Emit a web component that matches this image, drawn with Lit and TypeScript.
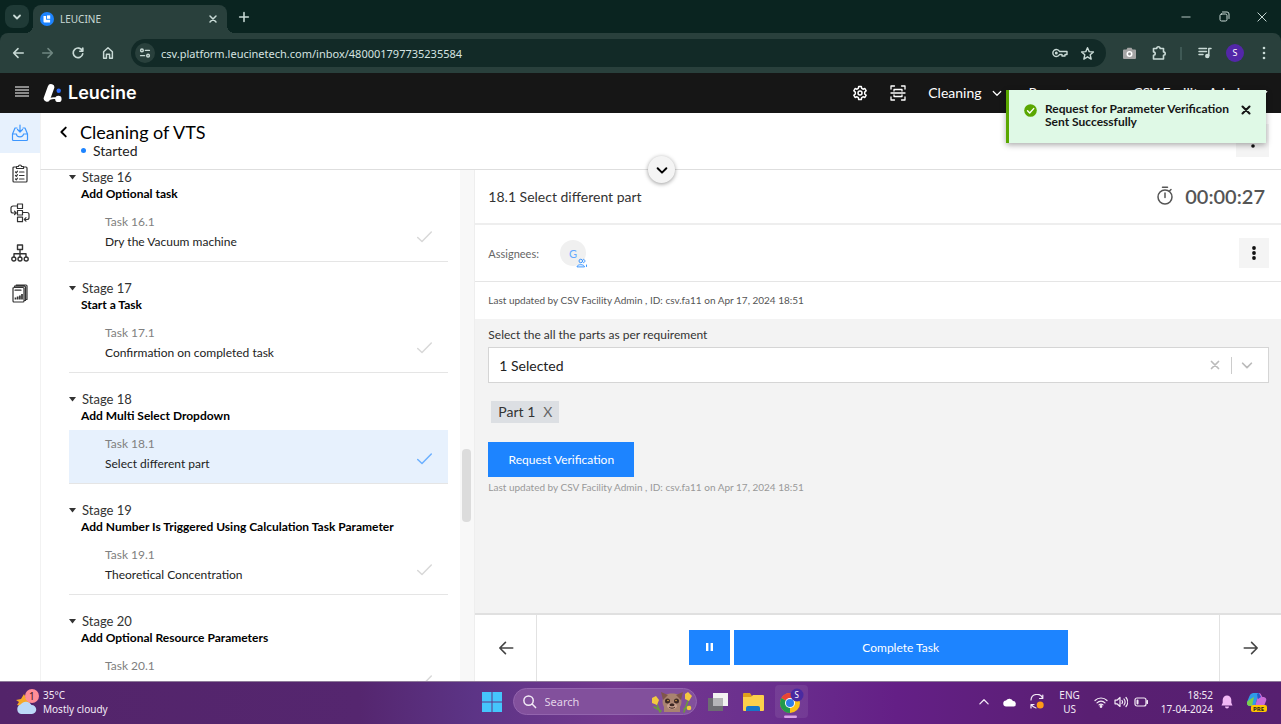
import { LitElement, html, css } from "lit";
import { customElement, property } from "lit/decorators.js";

interface Stage {
  no: number;
  name: string;
  task: string;
  active?: boolean;
}

const stages: Stage[] = [
  { no: 16, name: "Add Optional task", task: "Dry the Vacuum machine" },
  { no: 17, name: "Start a Task", task: "Confirmation on completed task" },
  { no: 18, name: "Add Multi Select Dropdown", task: "Select different part", active: true },
  { no: 19, name: "Add Number Is Triggered Using Calculation Task Parameter", task: "Theoretical Concentration" },
  { no: 20, name: "Add Optional Resource Parameters", task: "" },
];

const reset = css`
  * { box-sizing: border-box; }
  button, input, select {
    font: inherit; color: inherit; background: none; border: 0; margin: 0; padding: 0;
    border-radius: 0; appearance: none; outline: none; min-width: 0;
  }
  button { display: inline-flex; align-items: center; justify-content: center; cursor: pointer; flex: none; }
  a { color: inherit; text-decoration: none; }
  svg { display: block; flex: none; fill: none; stroke: currentColor; stroke-linecap: round; stroke-linejoin: round; }
  .solid { fill: currentColor; stroke: none; }
  .art { stroke: none; }
`;

const line = (size: number, width: number, d: string) => html`
  <svg width=${size} height=${size} viewBox="0 0 16 16" stroke-width=${width} aria-hidden="true"><path d=${d} /></svg>`;

@customElement("browser-chrome")
export class BrowserChrome extends LitElement {
  static styles = [reset, css`
    :host { display: block; flex: none; background: #0a2420; color: #c9dad6; font: 11px/16px "Noto Sans", sans-serif; }
    .tabs { display: flex; align-items: flex-end; height: 33px; padding-left: 5px; }
    .menu { width: 24px; height: 23px; border-radius: 8px; background: #1f3a36; align-self: center; }
    .tab { position: relative; display: flex; align-items: center; width: 194px; height: 28px; margin-left: 4px; padding: 0 8px 0 7px;
      border-radius: 8px 8px 0 0; background: #29403c; gap: 6px; font-size: 10px; }
    .tab::before, .tab::after { content: ""; position: absolute; bottom: 0; width: 8px; height: 8px; }
    .tab::before { right: 100%; background: radial-gradient(circle at 0 0, transparent 8px, #29403c 8px); }
    .tab::after { left: 100%; background: radial-gradient(circle at 100% 0, transparent 8px, #29403c 8px); }
    .name { flex: 1; }
    .add { width: 28px; height: 28px; margin: 0 auto 0 3px; align-self: center; }
    .win { width: 38px; height: 33px; }
    .bar { display: flex; align-items: center; height: 40px; padding: 0 7px 0 8px; background: #29403c; border-radius: 8px 8px 0 0; }
    .nav { width: 20px; height: 28px; margin-right: 10px; }
    .dim { color: #6f8681; }
    .url { display: flex; align-items: center; flex: 1; height: 28px; margin: 0 8px 0 3px; padding: 0 11px 0 4px; border-radius: 14px; background: #122a27; }
    .site { width: 20px; height: 20px; border-radius: 50%; background: #29403c; margin-right: 6px; }
    .text { flex: 1; height: 20px; color: #d5e3e0; }
    .end { margin-left: 12px; }
    .ext { width: 30px; height: 28px; }
    .sep { width: 2px; height: 13px; margin: 0 8px 0 6px; background: #3f5955; }
    .me { width: 18px; height: 18px; margin: 0 6px; border-radius: 50%; background: #5327a8; color: #fff; font-size: 9px; }
    .more { width: 20px; height: 28px; margin-left: 4px; }
  `];

  render() {
    return html`
      <div class="tabs">
        <button class="menu" aria-label="Search tabs">${line(12, 2.4, "M4 6l4 4 4-4")}</button>
        <div class="tab">
          <svg class="art" width="14" height="14" viewBox="0 0 14 14" aria-hidden="true">
            <circle cx="7" cy="7" r="7" fill="#1d84ff" />
            <path d="M3.500 4h2.600v3.800h4v2.600H4.500a1 1 0 0 1-1-1z" fill="#fff" /><path d="M7 3.400h3.200v3.400H7z" fill="#fff" />
          </svg>
          <span class="name">LEUCINE</span>
          <button aria-label="Close tab">${line(12, 2, "M4 4l8 8M12 4l-8 8")}</button>
        </div>
        <button class="add" aria-label="New tab">${line(14, 1.8, "M8 3v10M3 8h10")}</button>
        <button class="win" aria-label="Minimize">${line(12, 1.2, "M2.500 8h11")}</button>
        <button class="win" aria-label="Restore">
          <svg width="11" height="11" viewBox="0 0 11 11" aria-hidden="true"><rect x="1" y="3" width="7" height="7" rx="1.500" /><path d="M3.500 1h4.500a2 2 0 0 1 2 2v4.500" /></svg>
        </button>
        <button class="win" aria-label="Close">${line(12, 1.3, "M2.500 2.500l11 11M13.500 2.500l-11 11")}</button>
      </div>
      <div class="bar">
        <button class="nav" aria-label="Back">${line(14, 1.8, "M14 8H3M8 3L3 8l5 5")}</button>
        <button class="nav dim" aria-label="Forward">${line(14, 1.8, "M2 8h11M8 3l5 5-5 5")}</button>
        <button class="nav" aria-label="Reload">${line(14, 1.9, "M13 5.500A5.500 5.500 0 1 0 13.400 9M13.500 2.500v3.500H10")}</button>
        <button class="nav" aria-label="Home">${line(14, 1.7, "M3 6.500L8 2l5 4.500V14h-3.200V9.500H6.200V14H3z")}</button>
        <div class="url">
          <button class="site" aria-label="Site information">${line(14, 1.7, "M8.500 5H13M3 11h4.500M3 5a1.500 1.500 0 1 0 3 0a1.500 1.500 0 1 0-3 0M10 11a1.500 1.500 0 1 0 3 0a1.500 1.500 0 1 0-3 0")}</button>
          <input class="text" aria-label="Address" value="csv.platform.leucinetech.com/inbox/480001797735235584" />
          <button class="end" aria-label="Passwords">
            <svg width="16" height="12" viewBox="0 0 16 12" stroke-width="1.400" aria-hidden="true"><path d="M7.500 4.500A3.500 3.500 0 1 0 7.500 7.500H10V9h3V7.500h2v-3z" /><circle cx="4.300" cy="6" r=".8" /></svg>
          </button>
          <button class="end" aria-label="Bookmark">${line(15, 1.5, "M8 1.800l1.800 4.200 4.500.4-3.400 3 1 4.500L8 11.500l-3.900 2.400 1-4.500-3.400-3 4.500-.4z")}</button>
        </div>
        <button class="ext" aria-label="Screenshot extension">
          <svg class="art" width="13" height="12" viewBox="0 0 13 12" aria-hidden="true"><path d="M1 2.500h2.500l1-1.800h4l1 1.800H12a1 1 0 0 1 1 1V11a1 1 0 0 1-1 1H1a1 1 0 0 1-1-1V3.500a1 1 0 0 1 1-1z" fill="#a5a5a5" /><circle cx="6.500" cy="7" r="3" fill="#fff" /><circle cx="6.500" cy="7" r="1.400" fill="#888" /></svg>
        </button>
        <button class="ext" aria-label="Extensions">${line(16, 1.6, "M2.500 3.500h3.200a1.700 1.700 0 1 1 3.400 0h3.400v3.400a1.700 1.700 0 1 1 0 3.400v3.700h-10v-3.700a1.700 1.700 0 1 0 0-3.400z")}</button>
        <span class="sep"></span>
        <button class="ext" aria-label="Media">
          <svg width="14" height="12" viewBox="0 0 14 12" stroke-width="1.500" aria-hidden="true"><path d="M1 1.500h7.500M1 4.500h7.500M1 7.500h4M10.800 8.500V1.500h2.200" /><circle cx="9.300" cy="9" r="1.500" fill="currentColor" /></svg>
        </button>
        <button class="me" aria-label="Profile">S</button>
        <button class="more" aria-label="Menu"><svg class="solid" width="4" height="14" viewBox="0 0 4 14" aria-hidden="true"><circle cx="2" cy="2" r="1.300" /><circle cx="2" cy="7" r="1.300" /><circle cx="2" cy="12" r="1.300" /></svg></button>
      </div>`;
  }
}

@customElement("app-header")
export class AppHeader extends LitElement {
  static styles = [reset, css`
    :host { display: flex; flex: none; align-items: center; height: 40px; padding: 0 12px 0 15px; background: #161616; color: #fff; font-size: 14px; line-height: 20px; }
    .brand { display: flex; align-items: center; gap: 6px; margin: 0 auto 0 14px; font: 600 18px/20px "Inter", sans-serif; }
    .toggle { padding-bottom: 2px; }
    .tool { margin-right: 22px; }
    .item { display: flex; gap: 9px; }
    .reports { margin: 0 57px 0 26px; }
  `];

  render() {
    const caret = line(12, 1.6, "M3 6l5 5 5-5");
    return html`
      <button class="toggle" aria-label="Toggle menu"><svg width="14" height="12" viewBox="0 0 14 12" stroke-width="1.200" aria-hidden="true"><path d="M.5 1h13M.5 4h13M.5 7h13M.5 10h13" /></svg></button>
      <a class="brand" href="#">
        <svg class="art" width="19" height="20" viewBox="0 0 19 20" aria-hidden="true">
          <path d="M8 4.300L4 15.300" stroke="#fff" stroke-width="6.600" /><path d="M7 15.800c3-.9 5-.9 8.500 0" stroke="#fff" stroke-width="1.800" />
          <circle cx="15.400" cy="15.900" r="3.200" fill="#fff" /><circle cx="15.700" cy="7.800" r="2.200" fill="#2b6cff" />
        </svg>
        Leucine
      </a>
      <button class="tool" aria-label="Settings">
        <svg width="16" height="16" viewBox="0 0 16 16" stroke-width="1.500" aria-hidden="true"><path d="M6.700 1.500h2.600l.4 1.900 1.300.8 1.900-.7 1.300 2.300-1.500 1.300v1.800l1.500 1.300-1.300 2.300-1.900-.7-1.300.8-.4 1.900H6.700l-.4-1.900-1.300-.8-1.900.7-1.300-2.300 1.500-1.300V7.100L1.800 5.800l1.300-2.300 1.900.7 1.300-.8z" /><circle cx="8" cy="8" r="2" /></svg>
      </button>
      <button class="tool" aria-label="Scan">
        <svg width="16" height="16" viewBox="0 0 16 16" stroke-width="1.300" aria-hidden="true"><path d="M1 4V1h3.500M11.500 1H15v3M15 12v3h-3.500M4.500 15H1v-3M1 8h14M4 6V4.500h8V6M4 10v1.500h8V10" /></svg>
      </button>
      <button class="item">Cleaning ${caret}</button>
      <a class="reports" href="#">Reports</a>
      <button class="item">CSV Facility Admin ${caret}</button>`;
  }
}

@customElement("side-nav")
export class SideNav extends LitElement {
  static styles = [reset, css`
    :host { display: flex; flex-direction: column; flex: none; width: 40px; background: #fff; color: #333; }
    .link { display: flex; align-items: center; justify-content: center; height: 40px; }
    .on { background: #e7f1fd; color: #3d97ff; }
  `];

  render() {
    return html`
      <a class="link on" href="#" aria-label="Inbox"><svg width="18" height="18" viewBox="0 0 18 18" stroke-width="1.200" aria-hidden="true"><path d="M9 1v7M6.500 5.500L9 8l2.500-2.500M6 4H4L1.500 10v5.500a1 1 0 0 0 1 1h13a1 1 0 0 0 1-1V10L14 4h-2M1.500 10h4a3.500 2.800 0 0 0 7 0h4" /></svg></a>
      <a class="link" href="#" aria-label="Checklists"><svg width="16" height="19" viewBox="0 0 16 19" stroke-width="1.200" aria-hidden="true"><path d="M4.500 3H2a1 1 0 0 0-1 1v13a1 1 0 0 0 1 1h12a1 1 0 0 0 1-1V4a1 1 0 0 0-1-1h-2.500M4.500 4.500V2.500h2a1.500 1.500 0 0 1 3 0h2v2zM3.500 8l.8.800 1.200-1.600M7.500 8H12M3.500 11.500l.8.800 1.200-1.600M7.500 11.500H12M3.500 15l.8.800 1.200-1.600M7.500 15H12" /></svg></a>
      <a class="link" href="#" aria-label="Workflows"><svg width="20" height="20" viewBox="0 0 20 20" stroke-width="1.200" aria-hidden="true"><path d="M7.500 1h5v4.500h-5zM7.500 7.500h5V12h-5zM7.500 14.200h5v4.500h-5zM7.500 3H3a2 2 0 0 0-2 2v3a2 2 0 0 0 2 2h3M4.500 8.200L6.200 10l-1.700 1.700M12.500 9.500H17a2 2 0 0 1 2 2v3a2 2 0 0 1-2 2h-2.500M16 14.700l-1.700 1.800 1.700 1.700" /></svg></a>
      <a class="link" href="#" aria-label="Hierarchy"><svg width="18" height="18" viewBox="0 0 18 18" stroke-width="1.400" aria-hidden="true"><path d="M6.500 1h5v4.500h-5zM9 5.500V13M3 13v-3.200h12V13" /><circle cx="2.800" cy="15" r="2" /><circle cx="9" cy="15" r="2" /><circle cx="15.200" cy="15" r="2" /></svg></a>
      <a class="link" href="#" aria-label="Reports"><svg width="16" height="19" viewBox="0 0 16 19" stroke-width="1.200" aria-hidden="true"><path d="M1 4.500a1 1 0 0 1 1-1h9a1 1 0 0 1 1 1V17a1 1 0 0 1-1 1H2a1 1 0 0 1-1-1zM2.500 3.500V2.200h10a1 1 0 0 1 1 1V16.500H12M4.200 2.200V1H14a1 1 0 0 1 1 1v13.500h-1.500M3 6.200h6" /><path d="M3.500 15.500v-2M5.700 15.500v-3M7.900 15.500v-4M10 15.500V10" stroke-width="1.700" stroke-linecap="butt" /></svg></a>`;
  }
}

@customElement("stage-list")
export class StageList extends LitElement {
  @property({ attribute: false }) stages: Stage[] = [];

  static styles = [reset, css`
    :host { display: flex; flex: none; width: 35%; overflow: hidden; background: #fff; border-left: 1px solid #f2f2f2; color: #333; font-size: 12px; line-height: 20px; }
    .list { flex: 1; min-width: 0; padding: 0 12px 0 28px; height: 0; }
    .stage { margin-bottom: 19px; }
    .head { display: flex; align-items: center; gap: 6px; height: 14px; font-size: 13px; }
    .name { padding-left: 12px; color: #000; font-weight: 700; margin: 0 0 4px; font-size: inherit; }
    .task { display: flex; align-items: center; height: 54px; padding: 4px 16px 0 36px; border-bottom: 1px solid #e5e5e5; color: #222; }
    .label { flex: 1; align-self: flex-start; }
    .no { display: block; color: #808080; }
    .tick { color: #d8d8d8; }
    .active { background: #e7f1fd; }
    .active .tick { color: #6cb0ff; }
    .gutter { flex: none; width: 14px; background: #f8f8f8; padding: 279px 3px 0 2px; }
    .thumb { height: 73px; border-radius: 4px; background: #dcdcdc; }
  `];

  render() {
    return html`
      <div class="list">
        ${this.stages.map((s) => html`
          <section class="stage">
            <button class="head">
              <svg class="solid" width="7" height="5" viewBox="0 0 7 5" aria-hidden="true"><path d="M0 0h7L3.500 4.500z" /></svg>
              Stage ${s.no}
            </button>
            <h3 class="name">${s.name}</h3>
            <a class="task ${s.active ? "active" : ""}" href="#">
              <span class="label"><span class="no">Task ${s.no}.1</span>${s.task}</span>
              <svg class="tick" width="15" height="12" viewBox="0 0 15 12" stroke-width="1.500" stroke-linecap="butt" aria-hidden="true"><path d="M.7 6.500L5 10.500 14.300 1" /></svg>
            </a>
          </section>`)}
      </div>
      <div class="gutter"><div class="thumb"></div></div>`;
  }
}

@customElement("task-panel")
export class TaskPanel extends LitElement {
  static styles = [reset, css`
    :host { display: flex; flex-direction: column; flex: 1; min-width: 0; background: #fff; color: #333; border-left: 1px solid #eee; }
    .title { display: flex; align-items: center; height: 55px; padding: 0 16px 0 13px; border-bottom: 2px solid #eee; }
    .h { flex: 1; margin: 0; font-size: 14px; line-height: 20px; font-weight: 400; }
    .timer { display: flex; align-items: center; gap: 12px; padding-bottom: 2px; color: #555; font-size: 20px; line-height: 24px; font-weight: 600; }
    .who { display: flex; align-items: center; height: 57px; padding: 0 12px 0 13px; border-bottom: 1px solid #e5e5e5; color: #666; font-size: 11px; }
    .avatar { position: relative; width: 26px; height: 26px; margin: 0 auto 0 21px; border-radius: 50%; background: #f0f0f0; color: #63a9ff; display: grid; place-items: center; }
    .badge { position: absolute; left: 16px; top: 18px; color: #3d97ff; }
    .dots { width: 30px; height: 30px; background: #f4f4f4; color: #111; }
    .info { padding: 8px 13px; font-size: 10px; line-height: 21px; color: #555; }
    .body { flex: 1; padding: 6px 12px 0 13px; background: #f3f3f3; font-size: 12px; line-height: 20px; }
    .box { display: flex; align-items: center; height: 36px; margin-top: 2px; padding: 0 14px 0 10px; background: #fff; border: 1px solid #d5d5d5; color: #bbb; gap: 8px; }
    .pick { flex: 1; height: 34px; font-size: 14px; color: #222; padding-top: 2px; }
    .bar { width: 1px; height: 17px; background: #ccc; margin: 0 0 0 1px; }
    .chip { display: inline-flex; align-items: center; gap: 8px; height: 22px; margin: 18px 0 0 3px; padding: 0 7px; background: #dcdfe3; font-size: 14px; }
    .x { color: #666; }
    .verify { display: flex; width: 146px; height: 35px; margin-top: 19px; background: #1d84ff; color: #fff; }
    .note { margin: 0; color: #999; font-size: 10px; line-height: 21px; }
    .foot { display: flex; height: 68px; border-top: 2px solid #e0e0e0; color: #444; }
    .step { width: 62px; border-right: 1px solid #e2e2e2; }
    .next { border-right: 0; border-left: 1px solid #e2e2e2; }
    .acts { flex: 1; display: flex; align-items: center; justify-content: center; gap: 4px; padding-bottom: 2px; font-size: 12px; color: #fff; }
    .pause { width: 41px; height: 35px; background: #1d84ff; }
    .done { width: 49%; height: 35px; background: #1d84ff; }
  `];

  render() {
    const dots = html`<svg class="solid" width="4" height="14" viewBox="0 0 4 14" aria-hidden="true"><circle cx="2" cy="2" r="1.900" /><circle cx="2" cy="7" r="1.900" /><circle cx="2" cy="12" r="1.900" /></svg>`;
    return html`
      <div class="title">
        <h2 class="h">18.1 Select different part</h2>
        <span class="timer">
          <svg width="16" height="19" viewBox="0 0 16 19" stroke-width="1.500" stroke-linecap="butt" aria-hidden="true"><circle cx="8" cy="11" r="7" /><path d="M5.500 1.200h5M8 7v4.500M12.500 5l1.500-1.500" /></svg>
          00:00:27
        </span>
      </div>
      <div class="who">
        Assignees:
        <span class="avatar">G
          <svg class="badge" width="12" height="10" viewBox="0 0 12 10" aria-hidden="true"><circle cx="4.800" cy="3" r="1.800" /><path d="M1 8.500c0-2.500 7.500-2.500 7.500 0z" /><path d="M7.500 1.300c2 .2 2 3.200 0 3.400M10.500 7v1.500" /></svg>
        </span>
        <button class="dots" aria-label="Task options">${dots}</button>
      </div>
      <div class="info">Last updated by CSV Facility Admin , ID: csv.fa11 on Apr 17, 2024 18:51</div>
      <div class="body">
        <label for="parts">Select the all the parts as per requirement</label>
        <div class="box">
          <select class="pick" id="parts"><option>1 Selected</option></select>
          <button aria-label="Clear">${line(14, 2, "M4 4l8 8M12 4l-8 8")}</button>
          <span class="bar"></span>
          <button aria-label="Open">${line(14, 2, "M3 6l5 5 5-5")}</button>
        </div>
        <div class="chip">Part 1 <button class="x" aria-label="Remove Part 1">X</button></div>
        <button class="verify">Request Verification</button>
        <p class="note">Last updated by CSV Facility Admin , ID: csv.fa11 on Apr 17, 2024 18:51</p>
      </div>
      <div class="foot">
        <button class="step" aria-label="Previous task">${line(18, 1.4, "M14 8H2.500M7.500 3l-5 5 5 5")}</button>
        <div class="acts">
          <button class="pause" aria-label="Pause"><svg class="solid" width="7" height="8" viewBox="0 0 7 8" aria-hidden="true"><path d="M0 0h2.400v8H0zM4.600 0H7v8H4.600z" /></svg></button>
          <button class="done">Complete Task</button>
        </div>
        <button class="step next" aria-label="Next task">${line(18, 1.4, "M2 8h11.500M8.500 3l5 5-5 5")}</button>
      </div>`;
  }
}

@customElement("task-bar")
export class TaskBar extends LitElement {
  static styles = [reset, css`
    :host { display: grid; grid-template-columns: 1fr auto 1fr; align-items: center; flex: none; height: 43px; padding: 0 14px 3px;
      border-top: 1px solid #8d7a99; color: #f3eaf6; font: 10px/14px "Noto Sans", sans-serif;
      background: linear-gradient(90deg, #53246a 0%, #55266f 28%, #5c3486 37%, #74398f 48%, #6a2f8e 60%, #641f86 70%, #591f72 85%, #562070 100%); }
    .weather { display: flex; align-items: center; gap: 4px; justify-self: start; text-align: left; }
    .apps { display: flex; align-items: center; gap: 11px; margin-left: 8px; }
    .find { display: flex; align-items: center; width: 184px; height: 27px; padding: 0 3px 0 8px; border: 1px solid #9364ae; border-radius: 14px; background: #82509c; gap: 8px; }
    .q { flex: 1; font-size: 11px; height: 20px; }
    .q::placeholder { color: #e2d3e8; opacity: 1; }
    .app { height: 33px; }
    .files { margin-left: 4px; }
    .chrome { width: 33px; background: #ffffff14; border-radius: 4px; }
    .tray { display: flex; align-items: center; justify-self: end; }
    .lang { text-align: center; margin: 0 14px 0 15px; }
    .icon { margin-right: 13px; }
    .sys { gap: 6px; margin-right: 13px; }
    .clock { text-align: right; margin-right: 8px; }
    .bell { margin-right: 14px; }
  `];

  render() {
    return html`
      <button class="weather">
        <svg class="art" width="25" height="26" viewBox="0 0 25 26" aria-hidden="true">
          <path d="M10 5l2 4 4 1-2 4 1 5-12-3 2-3-3-2 5-1z" fill="#f7a928" /><circle cx="11" cy="14" r="5" fill="#f7a928" />
          <path d="M7 25a5 5 0 0 1-.5-9.500 6.500 6.500 0 0 1 11 .5A4.500 4.500 0 0 1 18 25z" fill="#bcd9f8" />
          <circle cx="18" cy="7" r="7" fill="#ff8c96" /><text x="15" y="11" font-size="10" fill="#3b1420">1</text>
        </svg>
        <span>35°C<br />Mostly cloudy</span>
      </button>
      <div class="apps">
        <button class="app" aria-label="Start"><svg class="art" width="20" height="20" viewBox="0 0 20 20" aria-hidden="true"><path d="M0 0h9.500v9.500H0zM10.500 0H20v9.500h-9.500zM0 10.500h9.500V20H0zM10.500 10.500H20V20h-9.500z" fill="#45c5fc" /></svg></button>
        <div class="find">
          ${line(15, 1.6, "M12 7A5 5 0 1 1 2 7A5 5 0 1 1 12 7M10.500 10.500L14.500 14.500")}
          <input class="q" placeholder="Search" aria-label="Search" />
          <svg class="art" width="42" height="24" viewBox="0 0 42 24" aria-hidden="true">
            <path d="M4 10l5 12M38 8l-5 14M10 21l-7-4M33 19l6-3" stroke="#6b9a3c" stroke-width="1.600" />
            <path d="M13 5c5-2 11-2 16 0 2 5 2 9 0 12v5H13v-5c-2-3-2-7 0-12z" fill="#a98370" /><path d="M10 2l7 3-5 5zM32 2l-7 3 5 5z" fill="#80564b" />
            <circle cx="16.500" cy="11" r="2.500" fill="#3d2824" /><circle cx="25.500" cy="11" r="2.500" fill="#3d2824" /><circle cx="17" cy="10.500" r=".8" fill="#d8a24a" /><circle cx="25" cy="10.500" r=".8" fill="#d8a24a" />
            <ellipse cx="21" cy="16" rx="5" ry="3.200" fill="#c9a08e" /><ellipse cx="21" cy="14.800" rx="2.500" ry="1.500" fill="#3d2824" /><path d="M18.500 17.500c1.500 1 3.500 1 5 0" stroke="#3d2824" />
            <path d="M1 8l4-2 3 4-2 5-5-2zM34 4l3-2 4 4-3 5-4-2z" fill="#f3c840" /><circle cx="38" cy="18" r="2.300" fill="#f3c840" />
          </svg>
        </div>
        <button class="app" aria-label="Task view"><svg class="art" width="20" height="20" viewBox="0 0 20 20" aria-hidden="true"><path d="M5 1h15v13H5z" fill="#f2f2f2" /><path d="M0 6h15v13H0z" fill="#6d6d72" /><path d="M5 6h10v8H5z" fill="#b5b5b8" /></svg></button>
        <button class="app files" aria-label="File Explorer"><svg class="art" width="21" height="20" viewBox="0 0 21 20" aria-hidden="true"><path d="M0 2a1 1 0 0 1 1-1h6l2 3h11v14H0z" fill="#e0a01c" /><path d="M0 5h8l2-2h10a1 1 0 0 1 1 1v14a1 1 0 0 1-1 1H1a1 1 0 0 1-1-1z" fill="#fcd04b" /><path d="M3 19v-3a2 2 0 0 1 2-2h10a2 2 0 0 1 2 2v3z" fill="#1677c8" /></svg></button>
        <button class="app chrome" aria-label="Chrome">
          <svg class="art" width="25" height="32" viewBox="0 0 25 32" aria-hidden="true">
            <circle cx="11" cy="17" r="10" fill="#fbc116" /><path d="M11 17L2.340 12A10 10 0 0 1 19.660 12z" fill="#ea4335" /><path d="M11 17L2.340 12A10 10 0 0 0 11 27z" fill="#229a4c" />
            <circle cx="11" cy="17" r="5" fill="#fff" /><circle cx="11" cy="17" r="4" fill="#2f7de9" />
            <circle cx="18" cy="9" r="6.500" fill="#4a2aa0" /><text x="15.500" y="12" font-size="8" fill="#fff">S</text><rect x="5" y="29.500" width="13" height="2.500" rx="1.200" fill="#d9a1e6" />
          </svg>
        </button>
      </div>
      <div class="tray">
        <button class="icon" aria-label="Hidden icons">${line(12, 1.7, "M2.500 10.500L8 5l5.500 5.500")}</button>
        <button class="icon" aria-label="Cloud storage"><svg class="art" width="14" height="10" viewBox="0 0 14 10" aria-hidden="true"><path d="M3.500 9.500a3 3 0 0 1-.5-6 4 4 0 0 1 7 .5 2.800 2.800 0 0 1 .8 5.500z" fill="#fff" /></svg></button>
        <button aria-label="Updates"><svg width="14" height="15" viewBox="0 0 14 15" stroke-width="1.200" aria-hidden="true"><path d="M1 6a6 6 0 0 1 11.500-2M12.800 1v3.500H9.500M1 14v-3.500h3M1.500 10.500A6 6 0 0 0 6 14" /><circle cx="10.200" cy="11" r="3.500" fill="#ff9a17" stroke="none" /></svg></button>
        <button class="lang">ENG<br />US</button>
        <button class="sys" aria-label="Network, volume and battery">
          <svg width="14" height="12" viewBox="0 0 14 12" stroke-width="1.200" aria-hidden="true"><path d="M1 4.500a8.500 8.500 0 0 1 12 0M3 6.800a5.600 5.600 0 0 1 8 0M5 8.900a3 3 0 0 1 4 0" /><circle cx="7" cy="10.500" r=".8" fill="currentColor" /></svg>
          <svg width="14" height="12" viewBox="0 0 14 12" stroke-width="1.200" aria-hidden="true"><path d="M1 4.200h2L6 1.500v9L3 7.800H1zM8 4.500a2.500 2.500 0 0 1 0 3M10 3a5 5 0 0 1 0 6M12 1.500a7 7 0 0 1 0 9" /></svg>
          <svg width="14" height="10" viewBox="0 0 14 10" stroke-width="1.200" aria-hidden="true"><rect x="1" y="1" width="11" height="8" rx="2" /><path d="M3.500 3.500v3M13.300 4v2" stroke-width="2" /></svg>
        </button>
        <button class="clock">18:52<br />17-04-2024</button>
        <button class="bell" aria-label="Notifications"><svg class="art" width="12" height="14" viewBox="0 0 12 14" aria-hidden="true"><path d="M6 .5a4.300 4.300 0 0 0-4.300 4.300v3L.5 10.500h11L10.300 7.800v-3A4.300 4.300 0 0 0 6 .5zM4 11.500h4a2 2 0 0 1-4 0z" fill="#f2b8f5" /></svg></button>
        <button aria-label="Copilot"><svg class="art" width="20" height="20" viewBox="0 0 20 20" aria-hidden="true">
          <path d="M6 1h6l-4 13H3a3 3 0 0 1-3-4l2.500-6A4 4 0 0 1 6 1z" fill="#2f9be8" /><path d="M2 8l5-3-2 9H3a3 3 0 0 1-3-4z" fill="#7cd04c" /><path d="M12 1c2 0 2.500 3 3.500 4H17a3 3 0 0 1 2 4l-2 5H8z" fill="#c96ad8" /><path d="M12 1l2 4-3 2-1-5z" fill="#2657c8" />
          <rect x="4" y="13" width="16" height="7" rx="2" fill="#ffc400" /><text x="6" y="19" font-size="6" font-weight="700" fill="#222">PRE</text></svg></button>
      </div>`;
  }
}

@customElement("app-root")
export class AppRoot extends LitElement {
  static styles = [reset, css`
    :host { display: flex; flex-direction: column; position: relative; height: 100vh; overflow: hidden; background: #fff; font-family: "Lato", sans-serif; }
    .main { display: flex; flex: 1; min-height: 0; }
    .work { display: flex; flex-direction: column; flex: 1; min-width: 0; }
    .top { position: relative; display: flex; align-items: flex-start; gap: 9px; height: 57px; padding: 9px 12px 0 16px; border-bottom: 1px solid #dedede; border-left: 1px solid #f2f2f2; color: #222; }
    .back { width: 14px; height: 20px; color: #000; }
    .titles { flex: 1; }
    .h1 { margin: 0; color: #000; font-size: 18px; line-height: 20px; font-weight: 400; }
    .state { display: flex; align-items: center; gap: 7px; font-size: 14px; line-height: 17px; }
    .dot { width: 5px; height: 5px; margin-left: 1px; border-radius: 50%; background: #1d84ff; }
    .more { width: 33px; height: 33px; margin-top: 2px; background: #f4f4f4; color: #111; }
    .fold { position: absolute; left: 50%; bottom: -14px; z-index: 1; width: 27px; height: 27px; margin-left: -13px; border-radius: 50%; background: #f4f4f4; box-shadow: 0 1px 4px #0006; color: #000; }
    .split { display: flex; flex: 1; min-height: 0; }
    .toast { position: absolute; right: 15px; top: 90px; z-index: 2; display: flex; align-items: flex-start; width: 260px; height: 53px; padding: 12px 13px 0 15px; border-left: 3px solid #5aa700; background: #dff9e6; box-shadow: 0 2px 6px #0005; color: #161616; font-size: 12px; line-height: 13px; font-weight: 700; }
    .msg { flex: 1; margin: 0 0 0 8px; }
    .ok { margin-top: 2px; }
    .close { height: 16px; }
  `];

  render() {
    return html`
      <browser-chrome></browser-chrome>
      <app-header></app-header>
      <div class="main">
        <side-nav></side-nav>
        <div class="work">
          <div class="top">
            <button class="back" aria-label="Back">${line(14, 2.2, "M10 3L5 8l5 5")}</button>
            <div class="titles">
              <h1 class="h1">Cleaning of VTS</h1>
              <div class="state"><span class="dot"></span>Started</div>
            </div>
            <button class="more" aria-label="Job options">
              <svg class="solid" width="4" height="14" viewBox="0 0 4 14" aria-hidden="true"><circle cx="2" cy="2" r="1.800" /><circle cx="2" cy="7" r="1.800" /><circle cx="2" cy="12" r="1.800" /></svg>
            </button>
            <button class="fold" aria-label="Expand details">${line(14, 2.2, "M3 6l5 5 5-5")}</button>
          </div>
          <div class="split">
            <stage-list .stages=${stages}></stage-list>
            <task-panel></task-panel>
          </div>
        </div>
      </div>
      <task-bar></task-bar>
      <div class="toast" role="status">
        <svg class="art ok" width="13" height="13" viewBox="0 0 13 13" aria-hidden="true"><circle cx="6.500" cy="6.500" r="6.300" fill="#5aa700" /><path d="M3.500 6.800l2.200 2.200 4-4.400" stroke="#fff" stroke-width="1.400" /></svg>
        <p class="msg">Request for Parameter Verification Sent Successfully</p>
        <button class="close" aria-label="Dismiss">${line(14, 2.4, "M4 4l8 8M12 4l-8 8")}</button>
      </div>`;
  }
}
